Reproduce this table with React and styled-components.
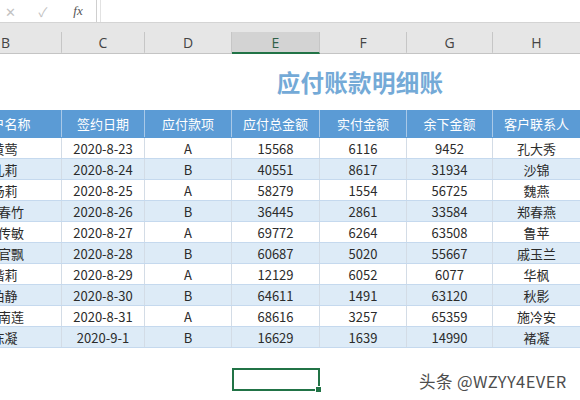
import React from "react";
import styled, { createGlobalStyle } from "styled-components";

const GlobalStyle = createGlobalStyle`
  html, body { margin: 0; padding: 0; background: #ffffff; }
  body { font-family: "Noto Sans CJK SC", "Noto Sans", sans-serif; overflow: hidden; }
`;

const COLS = "62px 83px 87px 88px 87px 86px 1fr";

const Page = styled.div`
  position: relative;
  width: 580px;
  height: 400px;
  overflow: hidden;
  background: #ffffff;
`;

const Chrome = styled.div`
  background: #e6e6e6;
  border-bottom: 1px solid #c4c4c4;
`;

const FormulaBar = styled.div`
  display: flex;
  height: 22px;
  background: #ffffff;
  border-bottom: 1px solid #d4d4d4;
`;

const IconBox = styled.div`
  width: 96px;
  display: flex;
  align-items: center;
  border-right: 1px solid #cfcfcf;
  background: #ffffff;
`;

const Icon = styled.span`
  width: ${(p) => p.$w}px;
  display: flex;
  justify-content: center;
  color: ${(p) => (p.$dark ? "#555555" : "#c2c2c2")};
  font-family: ${(p) => (p.$serif ? '"Liberation Serif", serif' : "inherit")};
  font-style: ${(p) => (p.$serif ? "italic" : "normal")};
  font-size: 13px;
`;

const FormulaInput = styled.div`
  flex: 1;
  margin-left: 3px;
  border-left: 1px solid #e2e2e2;
  background: #ffffff;
`;

const Strip = styled.div`
  height: 9px;
`;

const LetterRow = styled.div`
  display: grid;
  grid-template-columns: ${COLS};
  height: 21px;
`;

const Letter = styled.div`
  display: flex;
  align-items: center;
  justify-content: ${(p) => (p.$edge ? "flex-start" : "center")};
  padding-left: ${(p) => (p.$edge ? "1px" : "0")};
  box-sizing: border-box;
  border-right: 1px solid #c6c6c6;
  font-family: "Open Sans", "Noto Sans", sans-serif;
  font-size: 14px;
  color: ${(p) => (p.$active ? "#2f6048" : "#444444")};
  background: ${(p) => (p.$active ? "#d3d3d3" : "transparent")};
  border-bottom: 2px solid ${(p) => (p.$active ? "#217346" : "transparent")};
  margin-bottom: -1px;
  &:last-child { border-right: none; }
`;

const TitleRow = styled.div`
  height: 56px;
  display: flex;
  align-items: center;
  justify-content: center;
  padding-left: 140px;
`;

const Title = styled.h1`
  margin: 0;
  font-size: 23.5px;
  font-weight: 700;
  color: #74aad7;
  letter-spacing: 0.3px;
`;

const Row = styled.div`
  display: grid;
  grid-template-columns: ${COLS};
  height: ${(p) => (p.$head ? 28 : 21)}px;
  box-sizing: border-box;
  background: ${(p) => (p.$head ? "#5b9bd5" : p.$alt ? "#ddebf7" : "#ffffff")};
  border-bottom: 1px solid ${(p) => (p.$head ? "#5b9bd5" : "#c5d9ee")};
  color: ${(p) => (p.$head ? "#ffffff" : "#2b2b2b")};
  font-size: 13px;
`;

const Cell = styled.div`
  display: flex;
  align-items: center;
  justify-content: center;
  white-space: nowrap;
  overflow: hidden;
  box-sizing: border-box;
  border-right: 1px solid ${(p) => (p.$head ? "#a9c9e8" : "#d3dce6")};
  padding-right: ${(p) => (p.$clip ? "52px" : "0")};
  &:last-child { border-right: none; }
`;

const Spacer = styled.div`
  height: 20px;
`;

const SelectRow = styled.div`
  display: grid;
  grid-template-columns: ${COLS};
  height: 23px;
`;

const Selected = styled.div`
  grid-column: 4;
  position: relative;
  border: 2px solid #217346;
  box-sizing: border-box;
  &::after {
    content: "";
    position: absolute;
    right: -4px;
    bottom: -4px;
    width: 5px;
    height: 5px;
    background: #217346;
    border: 1px solid #ffffff;
  }
`;

const Watermark = styled.div`
  position: absolute;
  left: 419px;
  top: 369px;
  font-size: 16.5px;
  color: #4d4d4d;
  white-space: nowrap;
  text-shadow: 0 0 2px #ffffff, 0 0 2px #ffffff;
  letter-spacing: 0.4px;
`;

const headers = ["客户名称", "签约日期", "应付款项", "应付总金额", "实付金额", "余下金额", "客户联系人"];

const rows = [
  ["黄莺", "2020-8-23", "A", "15568", "6116", "9452", "孔大秀"],
  ["孔莉", "2020-8-24", "B", "40551", "8617", "31934", "沙锦"],
  ["杨莉", "2020-8-25", "A", "58279", "1554", "56725", "魏燕"],
  ["郑春竹", "2020-8-26", "B", "36445", "2861", "33584", "郑春燕"],
  ["鲁传敏", "2020-8-27", "A", "69772", "6264", "63508", "鲁苹"],
  ["上官飘", "2020-8-28", "B", "60687", "5020", "55667", "戚玉兰"],
  ["楷莉", "2020-8-29", "A", "12129", "6052", "6077", "华枫"],
  ["柏静", "2020-8-30", "B", "64611", "1491", "63120", "秋影"],
  ["宋南莲", "2020-8-31", "A", "68616", "3257", "65359", "施冷安"],
  ["陈凝", "2020-9-1", "B", "16629", "1639", "14990", "褚凝"],
];

const letters = ["B", "C", "D", "E", "F", "G", "H"];

export default function App() {
  return (
    <Page>
      <GlobalStyle />
      <Chrome>
        <FormulaBar>
          <IconBox>
            <Icon $w={20}>✕</Icon>
            <Icon $w={46}>✓</Icon>
            <Icon $w={24} $dark $serif>fx</Icon>
          </IconBox>
          <FormulaInput />
        </FormulaBar>
        <Strip />
        <LetterRow>
          {letters.map((l, i) => (
            <Letter key={l} $edge={i === 0} $active={l === "E"}>
              {l}
            </Letter>
          ))}
        </LetterRow>
      </Chrome>
      <TitleRow>
        <Title>应付账款明细账</Title>
      </TitleRow>
      <Row $head>
        {headers.map((h, i) => (
          <Cell key={h} $head $clip={i === 0}>
            {h}
          </Cell>
        ))}
      </Row>
      {rows.map((r, ri) => (
        <Row key={ri} $alt={ri % 2 === 1}>
          {r.map((v, ci) => (
            <Cell key={ci} $clip={ci === 0}>
              {v}
            </Cell>
          ))}
        </Row>
      ))}
      <Spacer />
      <SelectRow>
        <Selected />
      </SelectRow>
      <Watermark>头条 @WZYY4EVER</Watermark>
    </Page>
  );
}
